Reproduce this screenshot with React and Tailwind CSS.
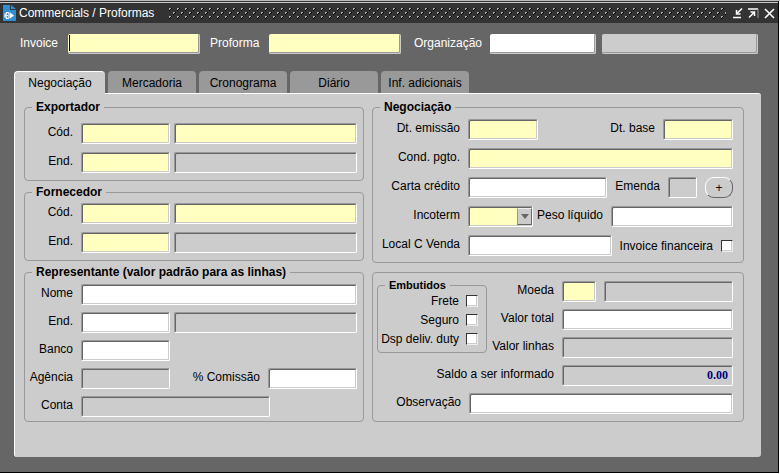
import React from "react";

const tones = {
  required: "bg-[#ffffc0]",
  normal: "bg-white",
  locked: "bg-[#cccccc]",
};

const bevel =
  "rounded-[2px] border border-t-[#999999] border-l-[#999999] border-b-white border-r-white shadow-[inset_1px_1px_0_#666666,inset_-1px_-1px_0_#cccccc]";

function Field({ id, tone = "normal", className = "flex-1", ...rest }) {
  return (
    <input
      id={id}
      type="text"
      readOnly={tone === "locked"}
      className={`h-[21px] min-w-0 px-1 outline-none ${bevel} ${tones[tone]} ${className}`}
      {...rest}
    />
  );
}

function HeaderField({ id, tone = "normal", className, ...rest }) {
  return (
    <input
      id={id}
      type="text"
      readOnly={tone === "locked"}
      className={`h-5 min-w-0 rounded-[2px] border-r border-b border-[#cccccc] px-1 shadow-[inset_-1px_-1px_0_#999999] outline-none ${tones[tone]} ${className}`}
      {...rest}
    />
  );
}

function Label({ htmlFor, className = "text-right", children }) {
  return (
    <label htmlFor={htmlFor} className={`shrink-0 pt-px leading-4 whitespace-nowrap ${className}`}>
      {children}
    </label>
  );
}

function Row({ children }) {
  return <div className="flex items-start gap-2">{children}</div>;
}

function Check({ id }) {
  return (
    <input
      id={id}
      type="checkbox"
      className="size-3 shrink-0 appearance-none border border-t-[#333333] border-l-[#333333] border-b-[#eeeeee] border-r-[#eeeeee] bg-white shadow-[inset_-1px_-1px_0_#cccccc]"
    />
  );
}

function Group({ title, className, children }) {
  return (
    <fieldset className={`min-w-0 rounded-[4px] border border-[#999999] ${className}`}>
      {title && <legend className="ml-[3px] px-1 leading-[14px] font-bold">{title}</legend>}
      {children}
    </fieldset>
  );
}

function TitleBar() {
  return (
    <header className="flex h-5 items-center bg-[#333333] pr-[3px] pl-[3px] text-white">
      <svg width="13" height="16" viewBox="0 0 13 16" aria-hidden="true">
        <path d="M0 0h7v5h6v11H0z" fill="#2f8fd3" />
        <path d="M8 0l5 4H8z" fill="#2f8fd3" />
        <path d="M5.500 7.500h-2v1.500h-1.500v3h1.500v1.500h2M2 10.500h3M6 7.500v6" fill="none" stroke="#ffffff" strokeWidth="1.200" />
        <path d="M7 7.500l4 3-4 3z" fill="#ffffff" />
      </svg>
      <h1 className="ml-[3px] leading-4 whitespace-nowrap">Commercials / Proformas</h1>
      <svg
        className="mr-[6px] ml-[15px] h-[11px] min-w-0 flex-1"
        shapeRendering="crispEdges"
        aria-hidden="true"
      >
        <defs>
          <pattern id="grip" width="8" height="8" patternUnits="userSpaceOnUse">
            <path d="M0 0h2v1H1v1H0zM4 4h2v1H5v1H4z" fill="#aaaaaa" />
            <path d="M1 1h1v1H1zM0 2h1v1H0zM2 0h1v1H2zM5 5h1v1H5zM4 6h1v1H4zM6 4h1v1H6z" fill="#000000" />
          </pattern>
        </defs>
        <rect width="100%" height="11" fill="url(#grip)" />
      </svg>
      <div className="flex items-center gap-[5px]">
        <button type="button" aria-label="Minimizar">
          <svg width="11" height="11" viewBox="0 0 11 11" fill="none" stroke="#ffffff">
            <path d="M1 9.500h8" strokeWidth="1.500" />
            <path d="M10 0.500L5 5.500M4.500 2v4h4" strokeWidth="1.500" />
          </svg>
        </button>
        <button type="button" aria-label="Maximizar">
          <svg width="11" height="11" viewBox="0 0 11 11" fill="none" stroke="#ffffff">
            <path d="M0 1h10" strokeWidth="1.500" />
            <path d="M10 1v9" stroke="#999999" />
            <path d="M1 9.500L6 4.500M2.500 4h4v4" strokeWidth="1.500" />
          </svg>
        </button>
        <button type="button" aria-label="Fechar">
          <svg width="11" height="11" viewBox="0 0 11 11" fill="none" stroke="#ffffff" strokeWidth="1.600">
            <path d="M1 1l9 9M10 1l-9 9" />
          </svg>
        </button>
      </div>
    </header>
  );
}

function Party({ title, prefix, className }) {
  return (
    <Group title={title} className={`pr-[6px] pl-1 ${className}`}>
      <div className="flex flex-col gap-2">
        <Row>
          <Label htmlFor={`${prefix}-cod`} className="w-11 text-right">Cód.</Label>
          <div className="flex min-w-0 flex-1 gap-1">
            <Field id={`${prefix}-cod`} tone="required" className="w-[89px]" />
            <Field aria-label={`${title} nome`} tone="required" />
          </div>
        </Row>
        <Row>
          <Label htmlFor={`${prefix}-end`} className="w-11 text-right">End.</Label>
          <div className="flex min-w-0 flex-1 gap-1">
            <Field id={`${prefix}-end`} tone="required" className="w-[89px]" />
            <Field aria-label={`${title} endereço`} tone="locked" />
          </div>
        </Row>
      </div>
    </Group>
  );
}

function Representative() {
  return (
    <Group title="Representante (valor padrão para as linhas)" className="pt-[5px] pr-[6px] pb-1 pl-1">
      <div className="flex flex-col gap-[7px]">
        <Row>
          <Label htmlFor="rep-nome" className="w-11 text-right">Nome</Label>
          <Field id="rep-nome" />
        </Row>
        <Row>
          <Label htmlFor="rep-end" className="w-11 text-right">End.</Label>
          <div className="flex min-w-0 flex-1 gap-1">
            <Field id="rep-end" className="w-[89px]" />
            <Field aria-label="Representante endereço" tone="locked" />
          </div>
        </Row>
        <Row>
          <Label htmlFor="rep-banco" className="w-11 text-right">Banco</Label>
          <Field id="rep-banco" className="w-[89px]" />
        </Row>
        <Row>
          <Label htmlFor="rep-agencia" className="w-11 text-right">Agência</Label>
          <Field id="rep-agencia" tone="locked" className="w-[89px]" />
          <Label htmlFor="rep-comissao" className="ml-auto">% Comissão</Label>
          <Field id="rep-comissao" className="w-[89px]" />
        </Row>
        <Row>
          <Label htmlFor="rep-conta" className="w-11 text-right">Conta</Label>
          <Field id="rep-conta" tone="locked" className="w-[189px]" />
        </Row>
      </div>
    </Group>
  );
}

function Negotiation() {
  return (
    <Group title="Negociação" className="pt-[5px] pr-[10px] pb-[6px] pl-1">
      <div className="flex flex-col gap-2">
        <Row>
          <Label htmlFor="dt-emissao" className="w-[83px] text-right">Dt. emissão</Label>
          <Field id="dt-emissao" tone="required" className="w-[70px]" />
          <Label htmlFor="dt-base" className="ml-auto">Dt. base</Label>
          <Field id="dt-base" tone="required" className="w-[70px]" />
        </Row>
        <Row>
          <Label htmlFor="cond" className="w-[83px] text-right">Cond. pgto.</Label>
          <Field id="cond" tone="required" />
        </Row>
        <Row>
          <Label htmlFor="carta" className="w-[83px] text-right">Carta crédito</Label>
          <Field id="carta" />
          <Label htmlFor="emenda">Emenda</Label>
          <Field id="emenda" tone="locked" className="w-[29px]" />
          <button
            type="button"
            className="h-[21px] w-7 shrink-0 rounded-[9px] border border-t-white border-l-white border-r-[#666666] border-b-[#666666] leading-4"
          >
            +
          </button>
        </Row>
        <Row>
          <Label htmlFor="incoterm" className="w-[83px] text-right">Incoterm</Label>
          <div className="flex min-w-0 flex-1 items-start gap-1">
            <div className="relative w-[65px] shrink-0">
              <select id="incoterm" className={`block h-[21px] w-full appearance-none outline-none ${bevel} ${tones.required}`} />
              <span className="pointer-events-none absolute top-[2px] right-px bottom-[2px] flex w-[15px] items-center justify-center border border-t-[#eeeeee] border-l-[#999999] border-r-[#666666] border-b-[#666666] bg-[#cccccc]">
                <svg width="8" height="5" viewBox="0 0 8 5" aria-hidden="true">
                  <path d="M0 0h8L4 5z" fill="#666666" />
                </svg>
              </span>
            </div>
            <Label htmlFor="peso">Peso líquido</Label>
            <Field id="peso" className="ml-1 flex-1" />
          </div>
        </Row>
        <Row>
          <Label htmlFor="local" className="w-[83px] text-right">Local C Venda</Label>
          <Field id="local" />
          <div className="flex items-center gap-2 pt-[2px]">
            <Label htmlFor="inv-fin">Invoice financeira</Label>
            <Check id="inv-fin" />
          </div>
        </Row>
      </div>
    </Group>
  );
}

const included = [
  ["frete", "Frete"],
  ["seguro", "Seguro"],
  ["ddd", "Dsp deliv. duty"],
];

function Totals() {
  return (
    <Group className="pt-[5px] pr-[10px] pb-[7px] pl-1">
      <div className="flex items-start">
        <fieldset className="w-[110px] shrink-0 rounded-[4px] border border-[#999999] pt-px pr-2 pb-[5px]">
          <legend className="ml-[7px] px-1 text-[11px] leading-[14px] font-bold">Embutidos</legend>
          <div className="flex flex-col gap-[3px]">
            {included.map(([id, text]) => (
              <div key={id} className="flex h-4 items-center justify-end gap-[7px]">
                <label htmlFor={id} className="leading-4 whitespace-nowrap">{text}</label>
                <Check id={id} />
              </div>
            ))}
          </div>
        </fieldset>
        <div className="flex min-w-0 flex-1 flex-col gap-[7px] pt-[3px]">
          <Row>
            <Label htmlFor="moeda" className="w-[67px] text-right">Moeda</Label>
            <Field id="moeda" tone="required" className="w-[34px]" />
            <Field aria-label="Nome da moeda" tone="locked" />
          </Row>
          <Row>
            <Label htmlFor="valor-total" className="w-[67px] text-right">Valor total</Label>
            <Field id="valor-total" />
          </Row>
          <Row>
            <Label htmlFor="valor-linhas" className="w-[67px] text-right">Valor linhas</Label>
            <Field id="valor-linhas" tone="locked" />
          </Row>
        </div>
      </div>
      <div className="mt-[7px] flex flex-col gap-[7px]">
        <Row>
          <Label htmlFor="saldo" className="w-[177px] text-right">Saldo a ser informado</Label>
          <Field
            id="saldo"
            tone="locked"
            defaultValue="0.00"
            className="flex-1 text-right font-['Liberation_Serif',serif] font-bold text-[#000080]"
          />
        </Row>
        <Row>
          <Label htmlFor="obs" className="w-[84px] text-right">Observação</Label>
          <Field id="obs" />
        </Row>
      </div>
    </Group>
  );
}

const tabs = ["Mercadoria", "Cronograma", "Diário", "Inf. adicionais"];

export default function App() {
  return (
    <div className="flex min-h-screen flex-col border-t border-[#bbbbbb] bg-white pr-px pb-px font-['Liberation_Sans',Arial,sans-serif] text-[12px] text-black">
      <div className="flex flex-1 flex-col border-t border-r border-b border-t-[#333333] border-r-black border-b-black bg-[#666666]">
        <div className="h-px bg-[#cccccc]" />
        <TitleBar />
        <div className="flex items-start gap-[10px] pt-[11px] pr-5 pb-[17px] pl-5 text-white">
          <div className="flex gap-2">
            <Label htmlFor="invoice" className="w-10">Invoice</Label>
            <div className="relative">
              <HeaderField id="invoice" tone="required" className="block w-[132px] text-black" />
              <span className="absolute top-px left-px h-4 w-px bg-black" />
            </div>
          </div>
          <div className="flex gap-2">
            <Label htmlFor="proforma" className="w-[51px]">Proforma</Label>
            <HeaderField id="proforma" tone="required" className="w-[132px] text-black" />
          </div>
          <div className="flex min-w-0 flex-1 gap-2">
            <Label htmlFor="org" className="w-[71px] text-right">Organização</Label>
            <div className="flex min-w-0 flex-1 gap-[6px]">
              <HeaderField id="org" className="w-[106px] text-black" />
              <HeaderField aria-label="Nome da organização" tone="locked" className="flex-1 text-black" />
            </div>
          </div>
        </div>
        <main className="pr-[17px] pb-[14px] pl-[14px]">
          <div role="tablist" className="flex gap-[3px]">
            <button
              type="button"
              role="tab"
              aria-selected="true"
              className="relative -mb-px h-[23px] w-[91px] rounded-t-[4px] border-t border-l border-white bg-[#cccccc] leading-4"
            >
              Negociação
            </button>
            {tabs.map((t) => (
              <button
                key={t}
                type="button"
                role="tab"
                aria-selected="false"
                className="h-[22px] w-[88px] rounded-t-[4px] bg-[#999999] pt-[2px] leading-4"
              >
                {t}
              </button>
            ))}
          </div>
          <section className="grid grid-cols-[340fr_372fr] items-start gap-2 rounded-b-[3px] rounded-tr-[3px] border-t border-l border-white bg-[#cccccc] pt-[6px] pr-[17px] pb-[35px] pl-[9px]">
            <div className="flex min-w-0 flex-col gap-1">
              <Party title="Exportador" prefix="exp" className="pt-[9px] pb-[7px]" />
              <Party title="Fornecedor" prefix="for" className="pt-1 pb-[7px]" />
              <Representative />
            </div>
            <div className="flex min-w-0 flex-col gap-[9px]">
              <Negotiation />
              <Totals />
            </div>
          </section>
        </main>
      </div>
    </div>
  );
}
